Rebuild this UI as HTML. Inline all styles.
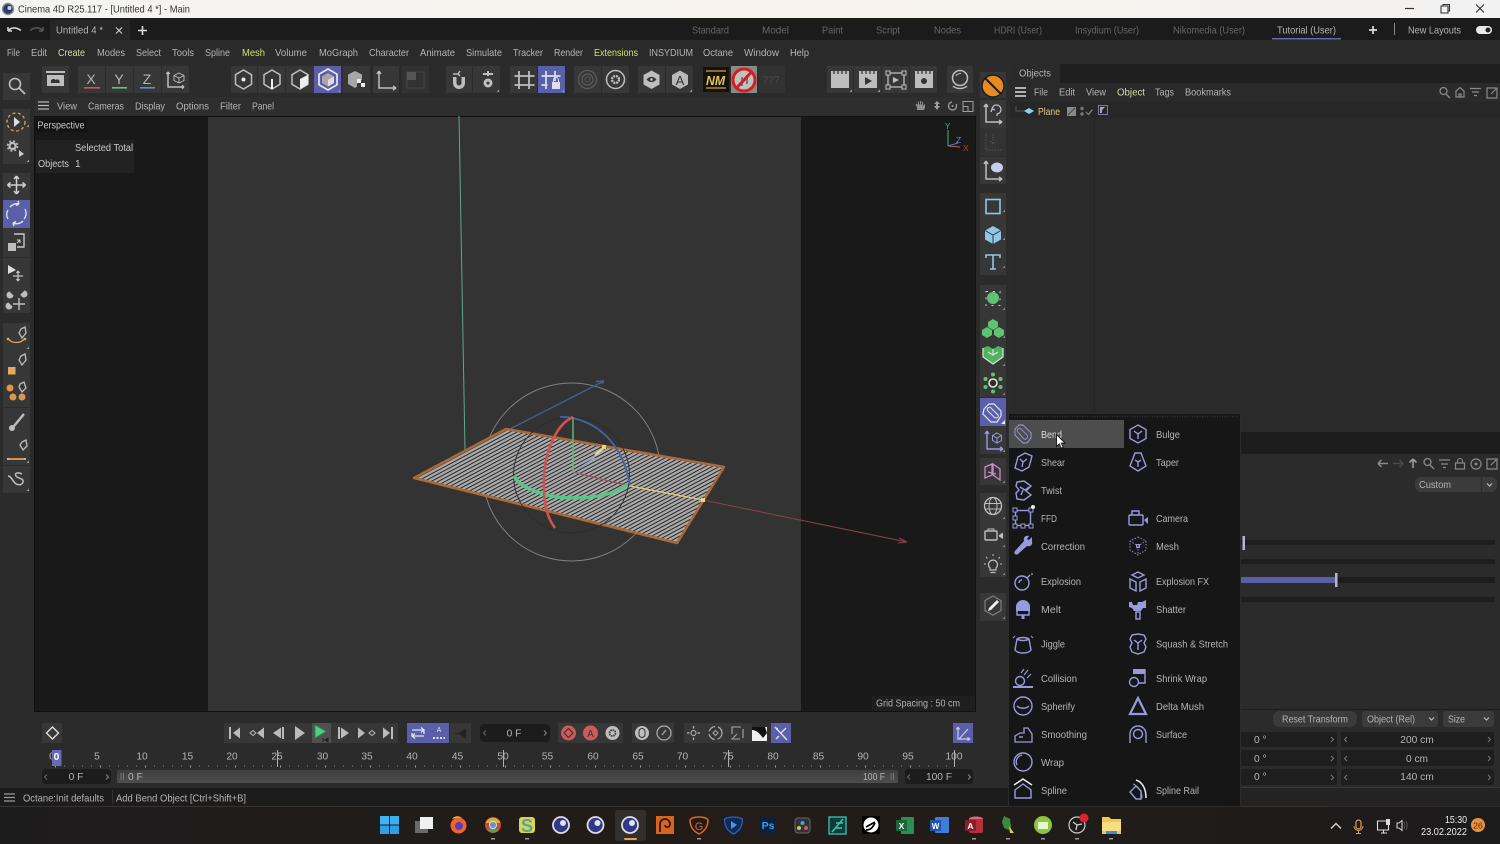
<!DOCTYPE html>
<html><head><meta charset="utf-8"><title>Cinema 4D</title>
<style>
html,body{margin:0;padding:0;background:#2b2b2b;width:1500px;height:844px;overflow:hidden}
svg{display:block;filter:blur(.35px)}
text{font-family:"Liberation Sans",sans-serif;font-size:10.2px;fill:#b4b4b4}
.d{fill:#666}.g{fill:#d6dca6}.w{fill:#dedede}
.m{text-anchor:middle}
.b{fill:#373737}.h{fill:#5a5fa8}
.i{fill:none;stroke:#bebebe;stroke-width:1.5}
.f{fill:#bebebe;stroke:none}
.p{fill:none;stroke:#9a99e0;stroke-width:1.4}
.pf{fill:#9a99e0;stroke:none}
.bl{fill:none;stroke:#8fc7e6;stroke-width:1.6}
</style></head>
<body>
<svg width="1500" height="844" viewBox="0 0 1500 844" xmlns="http://www.w3.org/2000/svg">
<defs>
<pattern id="hat" width="3.3" height="20" patternUnits="userSpaceOnUse" patternTransform="rotate(62)">
<rect width="3.3" height="20" fill="#aaaaaa"/><rect width="1" height="20" fill="#262626"/>
</pattern>
<linearGradient id="tb" x1="0" x2="1" y1="0" y2="0"><stop offset="0" stop-color="#f4f4f3"/><stop offset=".55" stop-color="#f8f3ec"/><stop offset="1" stop-color="#f2f2f2"/></linearGradient>
<linearGradient id="rng" x1="0" x2="0" y1="0" y2="1"><stop offset="0" stop-color="#3e3e3e"/><stop offset="1" stop-color="#4e4e4e"/></linearGradient>
<linearGradient id="tk" x1="0" x2="1" y1="0" y2="0"><stop offset="0" stop-color="#1d1c1d"/><stop offset=".5" stop-color="#231c18"/><stop offset="1" stop-color="#1c1b1c"/></linearGradient>
</defs>

<!-- base -->
<rect width="1500" height="844" fill="#2b2b2b"/>
<!-- title bar -->
<rect width="1500" height="18" fill="url(#tb)"/>
<circle cx="8" cy="9" r="5.5" fill="#2c3a6e"/><circle cx="8" cy="9" r="5.5" fill="none" stroke="#8d8d98" stroke-width="1.4"/><circle cx="9.5" cy="8" r="2" fill="#c9cfe4"/>
<text x="18" y="12.5" style="fill:#333;font-size:10.2px" textLength="172" lengthAdjust="spacingAndGlyphs">Cinema 4D R25.117 - [Untitled 4 *] - Main</text>
<path d="M1405 8.5h9" stroke="#333" stroke-width="1.2"/>
<path d="M1441 6h7v7h-7zM1443 6V4.500h6.500V11H1448" fill="none" stroke="#333" stroke-width="1.1"/>
<path d="M1476 4.500l8 8M1484 4.500l-8 8" stroke="#333" stroke-width="1.2"/>

<!-- tab bar -->
<rect y="18" width="1500" height="22" fill="#1b1b1b"/>
<rect x="50" y="20" width="80" height="20" fill="#262626"/>
<path d="M8 31c3-4 8-4 13-.500M8 31V27M8 31h4" fill="none" stroke="#d0d0d0" stroke-width="1.6"/>
<path d="M43 31c-3-4-8-4-13-.500M43 31V27M43 31h-4" fill="none" stroke="#555" stroke-width="1.600"/>
<text x="56" y="33.500" textLength="47" lengthAdjust="spacingAndGlyphs">Untitled 4 *</text>
<path d="M116 27.500l6 6M122 27.500l-6 6" stroke="#ccc" stroke-width="1.200"/>
<path d="M142.500 26v9M138 30.500h9" stroke="#ddd" stroke-width="1.600"/>
<text x="692" y="33.500" class="d" textLength="37" lengthAdjust="spacingAndGlyphs">Standard</text>
<text x="762" y="33.500" class="d" textLength="27" lengthAdjust="spacingAndGlyphs">Model</text>
<text x="822" y="33.500" class="d" textLength="21" lengthAdjust="spacingAndGlyphs">Paint</text>
<text x="876" y="33.500" class="d" textLength="24" lengthAdjust="spacingAndGlyphs">Script</text>
<text x="934" y="33.500" class="d" textLength="27" lengthAdjust="spacingAndGlyphs">Nodes</text>
<text x="994" y="33.500" class="d" textLength="48" lengthAdjust="spacingAndGlyphs">HDRI (User)</text>
<text x="1075" y="33.500" class="d" textLength="64" lengthAdjust="spacingAndGlyphs">Insydium (User)</text>
<text x="1173" y="33.500" class="d" textLength="72" lengthAdjust="spacingAndGlyphs">Nikomedia (User)</text>
<text x="1277" y="33.500" textLength="59" lengthAdjust="spacingAndGlyphs">Tutorial (User)</text>
<rect x="1272" y="38" width="69" height="1.500" fill="#6a6ab0"/>
<path d="M1373 26v8M1369 30h8" stroke="#ddd" stroke-width="1.700"/>
<rect x="1394" y="23" width="1" height="12" fill="#888"/>
<text x="1408" y="33.500" textLength="53" lengthAdjust="spacingAndGlyphs">New Layouts</text>
<rect x="1476" y="26" width="16" height="8" rx="4" fill="#e8e8e8"/><circle cx="1488" cy="30" r="2.500" fill="#222"/>

<!-- menu bar -->
<rect y="40" width="1500" height="24" fill="#2a2a2a"/>
<g>
<text x="7" y="56" textLength="13" lengthAdjust="spacingAndGlyphs">File</text>
<text x="31" y="56" textLength="16" lengthAdjust="spacingAndGlyphs">Edit</text>
<text x="58" y="56" class="g" textLength="27" lengthAdjust="spacingAndGlyphs">Create</text>
<text x="97" y="56" textLength="28" lengthAdjust="spacingAndGlyphs">Modes</text>
<text x="136" y="56" textLength="25" lengthAdjust="spacingAndGlyphs">Select</text>
<text x="172" y="56" textLength="22" lengthAdjust="spacingAndGlyphs">Tools</text>
<text x="205" y="56" textLength="25" lengthAdjust="spacingAndGlyphs">Spline</text>
<text x="242" y="56" style="fill:#d3e06a" textLength="23" lengthAdjust="spacingAndGlyphs">Mesh</text>
<text x="275" y="56" textLength="32" lengthAdjust="spacingAndGlyphs">Volume</text>
<text x="319" y="56" textLength="39" lengthAdjust="spacingAndGlyphs">MoGraph</text>
<text x="369" y="56" textLength="40" lengthAdjust="spacingAndGlyphs">Character</text>
<text x="420" y="56" textLength="35" lengthAdjust="spacingAndGlyphs">Animate</text>
<text x="466" y="56" textLength="36" lengthAdjust="spacingAndGlyphs">Simulate</text>
<text x="513" y="56" textLength="30" lengthAdjust="spacingAndGlyphs">Tracker</text>
<text x="554" y="56" textLength="29" lengthAdjust="spacingAndGlyphs">Render</text>
<text x="594" y="56" style="fill:#d3e06a" textLength="44" lengthAdjust="spacingAndGlyphs">Extensions</text>
<text x="649" y="56" textLength="44" lengthAdjust="spacingAndGlyphs">INSYDIUM</text>
<text x="703" y="56" textLength="30" lengthAdjust="spacingAndGlyphs">Octane</text>
<text x="744" y="56" textLength="35" lengthAdjust="spacingAndGlyphs">Window</text>
<text x="790" y="56" textLength="19" lengthAdjust="spacingAndGlyphs">Help</text>
</g>

<!-- top toolbar -->
<g>
<rect x="42" y="66" width="27" height="27" class="b"/>
<rect x="78" y="66" width="111" height="27" class="b"/>
<rect x="231" y="66" width="139" height="27" class="b"/>
<rect x="373" y="66" width="26" height="27" class="b"/>
<rect x="402" y="66" width="27" height="27" style="fill:#323232"/>
<rect x="446" y="66" width="54" height="27" class="b"/>
<rect x="510" y="66" width="27" height="27" class="b"/>
<rect x="574" y="66" width="55" height="27" class="b"/>
<rect x="638" y="66" width="55" height="27" class="b"/>
<rect x="758" y="66" width="27" height="27" fill="#323232"/>
<rect x="827" y="66" width="110" height="27" class="b"/>
<rect x="947" y="66" width="26" height="27" class="b"/>
<rect x="314" y="66" width="27" height="27" class="h"/>
<rect x="538" y="66" width="27" height="27" class="h"/>
<path d="M105.500 66v27M133.500 66v27M161.500 66v27M257.500 66v27M285.500 66v27M342 66v27M472.500 66v27M601.500 66v27M665.500 66v27M853.500 66v27M881.500 66v27M909.500 66v27" stroke="#2b2b2b"/>
</g>
<!-- archive -->
<path d="M46 71h19v2H46z" fill="#bebebe"/><path d="M47 75h17v11H47z" fill="#bebebe"/><path d="M51 83c-1-4 3-5 4.500-3 2-1.500 5 0 4 3z" fill="#333"/>
<!-- XYZ -->
<text x="91" y="84" class="m" style="font-size:14px">X</text><rect x="84" y="87" width="16" height="1.600" fill="#c25a5a"/>
<text x="119" y="84" class="m" style="font-size:14px">Y</text><rect x="112" y="87" width="15" height="1.600" fill="#63c46f"/>
<text x="147" y="84" class="m" style="font-size:14px">Z</text><rect x="140" y="87" width="15" height="1.600" fill="#5c8ed0"/>
<path d="M168 72v15h16M168 72l-1.500 2M168 72l1.500 2M184 87l-2-1.500M184 87l-2 1.500" class="i"/><path d="M179 73l5 2.500v5l-5 2.500-5-2.500v-5zM174 75.500l5 2.500 5-2.500M179 78v5" fill="none" stroke="#bebebe" stroke-width=".9"/>
<!-- hexes -->
<path d="M243.500 70l8 4.700v9.600l-8 4.700-8-4.700v-9.600z" class="i"/><circle cx="243.500" cy="79.500" r="2" fill="#eee"/>
<path d="M272 70l8 4.700v9.600l-8 4.700-8-4.700v-9.600z" class="i"/><rect x="271" y="79" width="2" height="10" fill="#eee"/>
<path d="M300 70l8 4.700v9.600l-8 4.700-8-4.700v-9.600z" class="i"/><path d="M300 79l8-4.300v9.600l-8 4.700z" fill="#eee"/>
<path d="M328 69l9 5.200v10.600l-9 5.200-9-5.200V74.200z" fill="none" stroke="#e6e6f2" stroke-width="1.700"/><path d="M328 73l6 3.500v6.500l-6 3.500-6-3.500v-6.500z" fill="#a8a8a8"/><path d="M328 80l6-3.500v6.500l-6 3.500z" fill="#dcdcdc"/>
<path d="M355 71l7 3.500v5l-5 4v3l-2 1.500-7-4V74.500z" fill="#a6a6a6"/><path d="M357 79h4v4h4v4h-4v-4h-4z" fill="#eee"/>
<path d="M379 71v17h17M379 71l-2 3M379 71l2 3M396 88l-3-2M396 88l-3 2" class="i"/>
<rect x="407" y="72" width="17" height="16" fill="none" stroke="#444" stroke-width="1.200"/><rect x="407" y="72" width="9" height="8" fill="#555"/>
<!-- magnets -->
<path d="M453 77v6a6 6 0 0 0 12 0v-6h-3.500v6a2.500 2.500 0 0 1-5 0v-6z" class="f"/><path d="M453 74h6M460 71l-2 3 2 2" class="i"/>
<circle cx="488" cy="83" r="4.500" fill="#bebebe"/><circle cx="488" cy="83" r="1.500" fill="#373737"/><path d="M483 74h10M488 71v5" class="i" style="stroke-width:2"/>
<path d="M519 71v18M529 71v18M514.500 76h20M514.500 85h20" class="i" style="stroke-width:1.800"/>
<path d="M546 71v18M555 71v10M541.500 76h19M541.500 85h6" fill="none" stroke="#dde" stroke-width="1.700"/><rect x="552" y="82" width="8" height="7" fill="#dde"/><path d="M553.500 82v-2a2.500 2.500 0 0 1 5 0v2" fill="none" stroke="#dde"/>
<circle cx="587.500" cy="79.500" r="9" fill="none" stroke="#5a5a5a" stroke-width="1.300"/><circle cx="587.500" cy="79.500" r="5.500" fill="none" stroke="#5a5a5a" stroke-width="1.300"/><circle cx="587.500" cy="79.500" r="2.500" fill="none" stroke="#5a5a5a"/>
<circle cx="615.500" cy="79.500" r="9" class="i"/><circle cx="615.500" cy="79.500" r="3.500" fill="none" stroke="#bebebe" stroke-width="2.400" stroke-dasharray="2 .8"/>
<path d="M651.500 70.500l8 4.500v9.500l-8 4.500-8-4.500V75z" fill="#bebebe"/><path d="M646.500 79.500c3-3.500 7-3.500 10 0-3 3.500-7 3.500-10 0z" fill="#373737"/><circle cx="651.500" cy="79.500" r="1.300" fill="#bebebe"/>
<path d="M680 70.500l8 4.500v9.500l-8 4.500-8-4.500V75z" fill="#b8b8b8"/><text x="680" y="85" class="m" style="font-size:13px;fill:#333">A</text>
<!-- NM -->
<rect x="703" y="67" width="26" height="25" fill="#141209"/>
<rect x="706" y="70" width="20" height="2" fill="#8a6d2a"/><rect x="706" y="87" width="20" height="2" fill="#8a6d2a"/>
<text x="715.500" y="85" class="m" style="font-size:13px;font-weight:bold;fill:#e8c25a;font-style:italic" textLength="19" lengthAdjust="spacingAndGlyphs">NM</text>
<rect x="731" y="66" width="26" height="27" fill="#8a8a8a"/><circle cx="744" cy="80" r="11" fill="#c0c0c0" stroke="#cf1f1f" stroke-width="3"/><path d="M741 77h2v9h-2zM746 75h2v9h-2z" fill="#777"/><path d="M736.500 88l15-16" stroke="#cf1f1f" stroke-width="3"/>
<text x="771" y="83" class="m" style="fill:#4c4c4c;font-size:10px">???</text>
<!-- clapper -->
<path d="M831 71h18v17h-18z" fill="#bebebe"/><path d="M834 71v3M838 71v3M842 71v3M846 71v3" stroke="#373737" stroke-width="1.300"/>
<path d="M859 71h18v17h-18z" fill="#bebebe"/><path d="M862 71v3M866 71v3M870 71v3M874 71v3" stroke="#373737" stroke-width="1.300"/><path d="M865 77l7 4-7 4z" fill="#333"/>
<rect x="888" y="73" width="16" height="14" fill="none" stroke="#bebebe" stroke-width="1.300"/><path d="M893 77l6 3-6 3z" fill="#bebebe"/><path d="M886 71h4v4h-4zM902 71h4v4h-4zM886 85h4v4h-4zM902 85h4v4h-4z" fill="#373737" stroke="#bebebe"/>
<path d="M915 71h18v17h-18z" fill="#bebebe"/><path d="M918 71v3M922 71v3M926 71v3M930 71v3" stroke="#373737" stroke-width="1.300"/><circle cx="924" cy="81" r="3" fill="#333"/>
<circle cx="960" cy="78" r="7.500" fill="none" stroke="#bebebe" stroke-width="1.500"/><path d="M953 86c2 2 4 2.500 7 2.500s5-.500 7-2.500" class="i"/><path d="M956 76c1-2 3-2.500 5-2.500" class="i" style="stroke-width:1"/>

<!-- view panel -->
<rect x="35" y="97" width="940" height="19" fill="#2e2e2e"/>
<path d="M38 102h11M38 105.500h11M38 109h11" stroke="#b9b9b9" stroke-width="1.200"/>
<text x="57" y="109.500" textLength="20" lengthAdjust="spacingAndGlyphs">View</text>
<text x="88" y="109.500" textLength="36" lengthAdjust="spacingAndGlyphs">Cameras</text>
<text x="135" y="109.500" textLength="30" lengthAdjust="spacingAndGlyphs">Display</text>
<text x="176" y="109.500" textLength="33" lengthAdjust="spacingAndGlyphs">Options</text>
<text x="220" y="109.500" textLength="21" lengthAdjust="spacingAndGlyphs">Filter</text>
<text x="252" y="109.500" textLength="22" lengthAdjust="spacingAndGlyphs">Panel</text>
<path d="M917 110v-3l-1.500-2.500 1-1 1.500 1.500v-3.500h1v3h1v-3.500h1v3.500h1v-3h1v4h1v-1l1-.500v3c0 2-1 3-2 3h-3z" fill="#8e8e8e"/>
<path d="M937 101l3 3h-2v2h2l-3 4-3-4h2v-2h-2z" fill="#9e9e9e"/>
<circle cx="952.500" cy="106" r="4" fill="none" stroke="#9e9e9e" stroke-width="1.300" stroke-dasharray="18 5"/><circle cx="952.500" cy="106" r="1" fill="#9e9e9e"/>
<rect x="963" y="101.500" width="10" height="10" fill="none" stroke="#9e9e9e"/><rect x="963" y="106.500" width="5" height="5" fill="none" stroke="#9e9e9e"/>

<!-- viewport -->
<rect x="34" y="116" width="942" height="596" fill="#111"/>
<rect x="35" y="117" width="940" height="594" fill="#191919"/>
<rect x="208" y="117" width="593" height="594" fill="#333"/>
<rect x="36" y="118" width="51" height="14" fill="#131313"/>
<text x="37.500" y="128.500" style="fill:#c9c9c9" textLength="47" lengthAdjust="spacingAndGlyphs">Perspective</text>
<rect x="36" y="140" width="98" height="33" fill="#222"/>
<text x="75" y="151" style="fill:#c9c9c9" textLength="58" lengthAdjust="spacingAndGlyphs">Selected Total</text>
<text x="38" y="167" style="fill:#c9c9c9" textLength="31" lengthAdjust="spacingAndGlyphs">Objects</text>
<text x="75" y="167" style="fill:#c9c9c9">1</text>
<!-- axis widget -->
<path d="M948 130v16" stroke="#4fb46f" stroke-width="1"/><path d="M948 146l10-3" stroke="#4a7cc4"/><path d="M948 146l12 1" stroke="#c25a5a"/>
<text x="945" y="129" style="font-size:8px;fill:#4fb46f">Y</text><text x="956" y="143" style="font-size:8.500px;fill:#5a8fd0">Z</text><text x="963" y="151" style="font-size:8.500px;fill:#c23a3a">X</text>
<!-- grid -->
<rect x="872" y="696" width="103" height="15" fill="#1f1f1f"/>
<text x="876" y="706.500" textLength="84" lengthAdjust="spacingAndGlyphs">Grid Spacing : 50 cm</text>

<!-- 3D scene -->
<path d="M459 116l6 334" stroke="#5da88a" stroke-width="1"/>
<circle cx="571.500" cy="472" r="89" fill="none" stroke="#808080" stroke-width="1"/>
<path d="M510 429L604 381M604 381l-8 0.500M604 381l-2 3" stroke="#3f5f9a" stroke-width="1.400" fill="none"/>
<path d="M703 500l204 42M907 542l-8-4M907 542l-9 1" stroke="#8a4248" stroke-width="1" fill="none"/>
<path d="M414 478L506 429L724 467L677 543Z" fill="url(#hat)" stroke="#a9693a" stroke-width="2.600" stroke-linejoin="round"/>
<circle cx="571.500" cy="475" r="58" fill="none" stroke="#2c2c2c" stroke-width=".9"/>
<path d="M560 417c20-1 60 12 70 68" fill="none" stroke="#3f64a8" stroke-width="1.800"/>
<path d="M573 417v55" stroke="#62bb72" stroke-width="1.400"/>
<path d="M573 472l52 13" stroke="#a0505a" stroke-width="1.200"/>
<path d="M573 472l22-14" stroke="#8fa0cc" stroke-width="1.400"/>
<path d="M595 455l9-7" stroke="#e4e09a" stroke-width="2"/><rect x="602" y="445" width="4" height="4" fill="#ecd86a"/>
<path d="M514 476c6 12 32 22 60 22 24 0 44-5 53-14" fill="none" stroke="#55c886" stroke-width="3.400"/>
<path d="M573 417c-18 8-30 38-29 70 0 18 4 32 11 41" fill="none" stroke="#d2504e" stroke-width="2.600"/>
<path d="M630 486l73 14" stroke="#ecd86a" stroke-width="1.100"/><rect x="701" y="498" width="4" height="4" fill="#ecd86a"/>

<!-- left toolbar -->
<g>
<rect x="3" y="73" width="27" height="27" class="b"/>
<rect x="3" y="109" width="27" height="55" class="b"/>
<rect x="3" y="173" width="27" height="84" class="b"/>
<rect x="3" y="258" width="27" height="55" class="b"/>
<rect x="3" y="323" width="27" height="84" class="b"/>
<rect x="3" y="408" width="27" height="57" class="b"/>
<rect x="3" y="466" width="27" height="27" class="b"/>
<rect x="3" y="200" width="27" height="28" class="h"/>
</g>
<circle cx="15" cy="84" r="5.500" class="i" style="stroke-width:1.600"/><path d="M19 88l6 6" class="i" style="stroke-width:1.800"/>
<circle cx="16" cy="122" r="9" fill="none" stroke="#d59a57" stroke-width="1.400" stroke-dasharray="3 2.500"/><path d="M14 117l6 5-6 5z" fill="#ddd"/>
<circle cx="12.500" cy="146" r="3" fill="none" stroke="#bebebe" stroke-width="2.200"/><circle cx="12.500" cy="146" r="5" fill="none" stroke="#bebebe" stroke-width="1.600" stroke-dasharray="2 2"/><path d="M19 150l5 4-5 3z" fill="#ccc"/>
<path d="M16.500 176v18M7.500 185h18M16.500 176l-2.500 3M16.500 176l2.500 3M16.500 194l-2.500-3M16.500 194l2.500-3M7.500 185l3-2.500M7.500 185l3 2.500M25.500 185l-3-2.500M25.500 185l-3 2.500" class="i" style="stroke:#cfcfcf"/>
<path d="M10 207a9 9 0 0 1 9-3M23 221a9 9 0 0 1-10 2M19 204l-1-3M19 204l-3 1.500M13 223l1 3M13 223l3-1.500" fill="none" stroke="#dfe0f4" stroke-width="1.500"/><path d="M25 209a9 9 0 0 1-1 10M8 219a9 9 0 0 1 0-9" fill="none" stroke="#dfe0f4" stroke-width="1.300"/>
<path d="M14 234h10v13h-7" fill="none" stroke="#c8c8c8" stroke-width="1.400"/><rect x="8" y="243" width="8" height="8" fill="#bebebe"/><path d="M17 243l3-3M20 243v-3h-3" stroke="#ccc" fill="none"/>
<path d="M8 265l8 5-8 4z" fill="#ddd"/><path d="M18 271v10M13 276h10M18 271l-1.500 2M18 271l1.500 2M18 281l-1.500-2M18 281l1.500-2" class="i" style="stroke-width:1.300"/>
<path d="M10 292a3 3 0 1 0 3 3M24 291a3 3 0 1 1-3 3M9 303a3 3 0 1 0 3 3" fill="#bebebe" stroke="#bebebe"/><path d="M19 298v12M13 304h12" class="i" style="stroke-width:1.400"/>
<path d="M21 329l4-2 1 6-4 5-3-5z" class="i" style="stroke-width:1.300"/><path d="M8 338c3 6 13 6 17 0" fill="none" stroke="#dba766" stroke-width="1.300"/><circle cx="8" cy="339" r="1.300" fill="#e6a85c"/><circle cx="25" cy="339" r="1.300" fill="#e6a85c"/>
<path d="M21 356l4-2 1 6-4 5-3-5z" class="i" style="stroke-width:1.300"/><rect x="8" y="367" width="7.500" height="7.500" fill="#e6a85c"/>
<circle cx="10" cy="388" r="3.500" fill="#e0944c"/><circle cx="13" cy="397" r="3.500" fill="#e0944c"/><circle cx="22" cy="397" r="3.500" fill="#e0944c"/><path d="M20 384l4-2 2 6-4 4-3-5z" class="i" style="stroke-width:1.300"/>
<path d="M24 414l-10 12" stroke="#bebebe" stroke-width="2.400"/><circle cx="12" cy="428" r="3" fill="#bebebe"/>
<path d="M22 442l4-2 1 6-4 4-3-5z" class="i" style="stroke-width:1.300"/><path d="M9 459h15" stroke="#e6a85c" stroke-width="1.700"/><circle cx="8" cy="459" r="1" fill="#ddd"/><circle cx="25" cy="459" r="1" fill="#ddd"/>
<path d="M22 474c-4-2-8-1-6 2s8 2 7 6-6 3-8 1c-3-3-4-7-7-7" class="i" style="stroke-width:1.500"/>

<!-- right toolbar -->
<g>
<rect x="980" y="72" width="26" height="26" class="b"/>
<rect x="980" y="100" width="26" height="28" class="b"/>
<rect x="980" y="128" width="26" height="28" fill="#323232"/>
<rect x="980" y="157" width="26" height="27" class="b"/>
<rect x="980" y="193" width="26" height="82" class="b"/>
<rect x="980" y="285" width="26" height="112" class="b"/>
<rect x="980" y="398" width="26" height="28" class="h"/>
<rect x="980" y="426" width="26" height="28" class="b"/>
<rect x="980" y="458" width="26" height="27" class="b"/>
<rect x="980" y="493" width="26" height="84" class="b"/>
<rect x="980" y="593" width="26" height="28" class="b"/>
</g>
<circle cx="993" cy="86" r="11" fill="#e88a1e" stroke="#1d1d1d" stroke-width="1.500"/><path d="M985 78l16 16" stroke="#1d1d1d" stroke-width="2"/>
<path d="M986 104v18h16M986 104l-2 3M986 104l2 3M1002 122l-3-2M1002 122l-3 2" class="i"/><path d="M992 109a4.500 4.500 0 1 1 5 5l0 2M992 109l-1 3M992 109l3 1" class="i" style="stroke-width:1.300"/>
<path d="M986 134v16h15M993 134v10M990 141l3 3 3-3" fill="none" stroke="#505050" stroke-dasharray="1.500 1.200" stroke-width="1.200"/>
<path d="M986 161v18h16M986 161l-2 3M986 161l2 3M1002 179l-3-2M1002 179l-3 2" class="i"/><ellipse cx="997" cy="167.500" rx="6" ry="5" fill="#c8cdf2"/>
<rect x="986" y="199.500" width="14" height="14" fill="none" stroke="#8fc7e6" stroke-width="1.600"/>
<path d="M993 226l8 4.500v9l-8 4.500-8-4.500v-9z" fill="#8fc7e6"/><path d="M985 230.500l8 4.500 8-4.500M993 235v9" stroke="#2e3a44" stroke-width="1" fill="none"/>
<path d="M986 258v-3h14v3M993 255v14M990 269h6" class="bl"/>
<circle cx="993" cy="298" r="6" fill="#5fc46f"/><path d="M986 291.500h14v14h-14z" fill="none" stroke="#ccc" stroke-width="1" stroke-dasharray="2 4.900"/>
<path d="M993 319l5 3v5l-5 3-5-3v-5z M987 327l5 3v5l-5 3-5-3v-5z M999 327l5 3v5l-5 3-5-3v-5z" fill="#5fc46f"/>
<path d="M983 348l5-2 5 3 5-3 5 2v9l-10 7-10-7z" fill="#4fb360"/><path d="M983 348v9l10 7 10-7v-9M988 352l5 3 5-3M993 349v6" fill="none" stroke="#e0e0e0" stroke-width="1.200"/>
<circle cx="993" cy="383" r="4" fill="#2d2d2d" stroke="#dfe7df" stroke-width="1.600"/>
<g fill="#5fc46f"><circle cx="993" cy="374.500" r="2"/><circle cx="993" cy="391.500" r="2"/><circle cx="985.500" cy="379" r="2"/><circle cx="1000.500" cy="379" r="2"/><circle cx="985.500" cy="387" r="2"/><circle cx="1000.500" cy="387" r="2"/></g>
<g transform="translate(993 412)"><path d="M-9-3l5-5h5l7 7v5l-4 6h-6l-8-8z" fill="none" stroke="#e2e3f6" stroke-width="1.200"/><path d="M-5-4c1-1 2-1 3 0l7 7c1 1 0 3-1 3s-2 0-3-1l-6-6c-1-1-1-2 0-3z" fill="none" stroke="#e2e3f6" stroke-width="1"/></g>
<path d="M987 431v18h16M987 431l-2 3M987 431l2 3M1003 449l-3-2M1003 449l-3 2" fill="none" stroke="#9a99e0" stroke-width="1.400"/><path d="M997 433l4.500 2.500v5l-4.500 2.500-4.500-2.500v-5zM992.500 435.500l4.500 2.500 4.500-2.500M997 438v5" fill="none" stroke="#9a99e0"/>
<path d="M985 467l7-3v11l-7 3zM993 464l7 5v11l-7-5zM988 472l8 2" fill="none" stroke="#c68ccc" stroke-width="1.300"/>
<circle cx="993" cy="506" r="8.500" fill="none" stroke="#bebebe" stroke-width="1.300"/><ellipse cx="993" cy="506" rx="4" ry="8.500" fill="none" stroke="#bebebe"/><path d="M984.500 503.500h17M984.500 509h17" stroke="#bebebe"/>
<rect x="985" y="531" width="12" height="9" rx="1" fill="none" stroke="#bebebe" stroke-width="1.400"/><path d="M988 531v-2h6v2" fill="none" stroke="#bebebe"/><path d="M999 535l4-2.500v6.500l-4-2.500z" fill="#bebebe"/>
<path d="M990 568a4.500 4.500 0 1 1 6 0v2h-6zM990.500 572.500h5" class="i" style="stroke-width:1.200"/><path d="M993 554v2M986 557l1.500 1.500M1000 557l-1.500 1.500M984 564h2M1002 564h-2" class="i" style="stroke-width:1"/>
<path d="M993 596l8 4.600v10l-8 4.600-8-4.600v-10z" fill="none" stroke="#7e7e7e" stroke-width="1.200"/><path d="M988 611l1-3 8-8 2 2-8 8z" fill="#eee"/>

<!-- small corner triangles -->
<path d="M29 127v-2.500l-2.500 2.500zM29 162v-2.500l-2.500 2.500zM29 349v-2.500l-2.500 2.500zM29 463v-2.500l-2.500 2.500zM29 491v-2.500l-2.500 2.500zM340 92v-2.500l-2.500 2.500zM499 92v-2.500l-2.500 2.500zM564 92v-2.500l-2.500 2.500zM692 92v-2.500l-2.500 2.500zM852 92v-2.500l-2.500 2.500zM880 92v-2.500l-2.500 2.500z" fill="#999"/>
<path d="M1005 424v-4l-4 4z" fill="#eee"/>
<path d="M1005 212v-2.500l-2.500 2.500zM1005 240v-2.500l-2.500 2.500zM1005 268v-2.500l-2.500 2.500zM1005 310v-2.500l-2.500 2.500zM1005 338v-2.500l-2.500 2.500zM1005 366v-2.500l-2.500 2.500zM1005 395v-2.500l-2.500 2.500zM1005 452v-2.500l-2.500 2.500zM1005 483v-2.500l-2.500 2.500zM1005 519v-2.500l-2.500 2.500zM1005 547v-2.500l-2.500 2.500zM1005 575v-2.500l-2.500 2.500zM1005 619v-2.500l-2.500 2.500z" fill="#888"/>

<!-- objects panel -->
<rect x="1010" y="64" width="490" height="19" fill="#1f1f1f"/>
<rect x="1010" y="64" width="50" height="19" fill="#2a2a2a"/>
<text x="1019" y="76.500" textLength="32" lengthAdjust="spacingAndGlyphs">Objects</text>
<rect x="1010" y="83" width="490" height="349" fill="#2a2a2a"/>
<rect x="1010" y="102" width="490" height="16" fill="#272727"/>
<rect x="1094" y="102" width="1" height="330" fill="#242424"/>
<path d="M1015 88h11M1015 92h11M1015 96h11" stroke="#ddd" stroke-width="1.500"/>
<text x="1034" y="95.500" textLength="14" lengthAdjust="spacingAndGlyphs">File</text>
<text x="1059" y="95.500" textLength="16" lengthAdjust="spacingAndGlyphs">Edit</text>
<text x="1086" y="95.500" textLength="20" lengthAdjust="spacingAndGlyphs">View</text>
<text x="1117" y="95.500" class="g" textLength="28" lengthAdjust="spacingAndGlyphs">Object</text>
<text x="1155" y="95.500" textLength="19" lengthAdjust="spacingAndGlyphs">Tags</text>
<text x="1185" y="95.500" textLength="46" lengthAdjust="spacingAndGlyphs">Bookmarks</text>
<path d="M1016 106v5h8" fill="none" stroke="#555"/><path d="M1029 108l5 3-5 3-5-3z" fill="#8fd0ea"/>
<text x="1038" y="115" style="fill:#e2c98a" textLength="22" lengthAdjust="spacingAndGlyphs">Plane</text>
<rect x="1067" y="107" width="9" height="9" fill="#8a8a8a"/><path d="M1068 115l7-7" stroke="#444"/>
<circle cx="1082" cy="108.500" r="1.700" fill="#777"/><circle cx="1082" cy="114" r="1.700" fill="#777"/>
<path d="M1086 112l2.500 2.500 4-5" fill="none" stroke="#888" stroke-width="1.100"/>
<rect x="1098.500" y="105.500" width="9" height="9" fill="none" stroke="#7878a8"/><path d="M1100 107h5l-3 3v3h-2z" fill="#aaa"/>
<circle cx="1443.500" cy="91" r="3.500" fill="none" stroke="#8a8a8a" stroke-width="1.300"/><path d="M1446 94l4 4" stroke="#8a8a8a" stroke-width="1.300"/>
<path d="M1456 97v-6l4-3.500 4 3.500v6zM1459 97v-3h2v3" fill="none" stroke="#8a8a8a" stroke-width="1.200"/>
<path d="M1470 88.500h11M1472 92h7M1474 95.500h3" stroke="#8a8a8a" stroke-width="1.300"/>
<path d="M1495 88h-8v10h10v-7M1491 94l6-6M1494 88h3v3" fill="none" stroke="#8a8a8a" stroke-width="1.200"/>

<!-- separator + attribute panel -->
<rect x="1010" y="432" width="490" height="22" fill="#1d1d1d"/>
<rect x="1241" y="454" width="259" height="255" fill="#2b2b2b"/>
<path d="M1378 463.500h10M1378 463.500l3.500-3.500M1378 463.500l3.500 3.500" fill="none" stroke="#8a8a8a" stroke-width="1.500"/>
<path d="M1393 463.500h10M1403 463.500l-3.500-3.500M1403 463.500l-3.500 3.500" fill="none" stroke="#4a4a4a" stroke-width="1.500"/>
<path d="M1413 468v-9M1413 459l-3.500 3.500M1413 459l3.500 3.500" fill="none" stroke="#9a9a9a" stroke-width="1.600"/>
<circle cx="1427.500" cy="462" r="3.500" fill="none" stroke="#8a8a8a" stroke-width="1.300"/><path d="M1430 465l4 4" stroke="#8a8a8a" stroke-width="1.300"/>
<path d="M1439 460h11M1441 464h7M1443 467.500h3" stroke="#8a8a8a" stroke-width="1.300"/>
<rect x="1455.500" y="463" width="9" height="6" fill="none" stroke="#8a8a8a" stroke-width="1.200"/><path d="M1457.500 463v-2a2.500 2.500 0 0 1 5 0v2" fill="none" stroke="#8a8a8a"/>
<circle cx="1476" cy="464" r="5" fill="none" stroke="#8a8a8a" stroke-width="1.200"/><circle cx="1476" cy="464" r="1.500" fill="#8a8a8a"/>
<path d="M1495 459h-8v10h10v-7M1491 465l6-6M1494 459h3v3" fill="none" stroke="#8a8a8a" stroke-width="1.200"/>
<rect x="1415" y="477" width="82" height="15" rx="6" fill="#3b3b3b"/>
<rect x="1481" y="477" width="1" height="15" fill="#2b2b2b"/>
<text x="1419" y="488" textLength="32" lengthAdjust="spacingAndGlyphs">Custom</text>
<path d="M1487 483.500l2.500 2.500 2.500-2.500" fill="none" stroke="#bbb" stroke-width="1.200"/>
<rect x="1241" y="540" width="254" height="5" fill="#1e1e1e"/>
<rect x="1241" y="559" width="254" height="5" fill="#1e1e1e"/>
<rect x="1241" y="577" width="254" height="6" fill="#1e1e1e"/>
<rect x="1241" y="577" width="95" height="6" fill="#5a5fa8"/>
<rect x="1241" y="597" width="254" height="5" fill="#1e1e1e"/>
<rect x="1242.500" y="536" width="2.500" height="14" fill="#b6b6c6"/>
<rect x="1335" y="573" width="2.500" height="14" fill="#b6b6c6"/>
<rect x="1241" y="709" width="259" height="1" fill="#1d1d1d"/>
<rect x="1273" y="711" width="84" height="16" rx="7" fill="#3b3b3b"/>
<text x="1282" y="722.500" textLength="66" lengthAdjust="spacingAndGlyphs">Reset Transform</text>
<rect x="1362" y="711" width="76" height="16" rx="3" fill="#3b3b3b"/>
<text x="1367" y="722.500" textLength="48" lengthAdjust="spacingAndGlyphs">Object (Rel)</text>
<path d="M1429 717.500l2.500 2.500 2.500-2.500" fill="none" stroke="#bbb" stroke-width="1.200"/>
<rect x="1443" y="711" width="51" height="16" rx="3" fill="#3b3b3b"/>
<text x="1448" y="722.500" textLength="17" lengthAdjust="spacingAndGlyphs">Size</text>
<path d="M1484 717.500l2.500 2.500 2.500-2.500" fill="none" stroke="#bbb" stroke-width="1.200"/>
<g fill="#1e1e1e">
<rect x="1241" y="732" width="96" height="15" rx="2"/><rect x="1241" y="750" width="96" height="16" rx="2"/><rect x="1241" y="769" width="96" height="16" rx="2"/>
<rect x="1341" y="732" width="153" height="15" rx="2"/><rect x="1341" y="750" width="153" height="16" rx="2"/><rect x="1341" y="769" width="153" height="16" rx="2"/>
</g>
<text x="1254" y="743">0 °</text><text x="1254" y="762">0 °</text><text x="1254" y="780">0 °</text>
<text x="1417" y="743" class="m">200 cm</text><text x="1417" y="762" class="m">0 cm</text><text x="1417" y="780" class="m">140 cm</text>
<path d="M1331 737l2.500 2.500-2.500 2.500M1331 756l2.500 2.500-2.500 2.500M1331 775l2.500 2.500-2.500 2.500M1488 737l2.500 2.500-2.500 2.500M1488 756l2.500 2.500-2.500 2.500M1488 775l2.500 2.500-2.500 2.500M1347 737l-2.500 2.500 2.500 2.500M1347 756l-2.500 2.500 2.500 2.500M1347 775l-2.500 2.500 2.500 2.500" fill="none" stroke="#777"/>
<rect x="1241" y="787" width="259" height="1" fill="#383838"/>

<!-- timeline -->
<rect x="35" y="713" width="940" height="74" fill="#2b2b2b"/>
<rect x="42" y="723" width="20" height="20" class="b"/>
<path d="M52.500 727l6 6-6 6-6-6z" fill="none" stroke="#ddd" stroke-width="1.400"/>
<rect x="224" y="723" width="174" height="20" class="b"/>
<rect x="312" y="723" width="19" height="20" fill="#505050"/>
<path d="M230 727v12" stroke="#bbb" stroke-width="2"/><path d="M240 727.500l-7 5.500 7 5.500z" fill="#bbb"/>
<path d="M250 733l3-2.500 3 2.500-3 2.500z" fill="none" stroke="#bbb"/><path d="M264 727.500l-7 5.500 7 5.500z" fill="#bbb"/>
<path d="M281 727.500l-8 5.500 8 5.500z" fill="#bbb"/><path d="M283 727v12" stroke="#bbb" stroke-width="2"/>
<path d="M295 726l10 7-10 7z" fill="#bbb"/>
<path d="M315 725l11 6.500-11 6.500z" fill="#4fd080" stroke="#2c8a56"/><path d="M323 738v4M328 738l-3 2 3 2z" stroke="#222" fill="#222"/>
<path d="M339 727v12" stroke="#bbb" stroke-width="2"/><path d="M341 727.500l8 5.500-8 5.500z" fill="#bbb"/>
<path d="M358 727.500l7 5.500-7 5.500z" fill="#bbb"/><path d="M369 733l3-2.500 3 2.500-3 2.500z" fill="none" stroke="#bbb"/>
<path d="M383 727.500l7 5.500-7 5.500z" fill="#bbb"/><path d="M392 727v12" stroke="#bbb" stroke-width="2"/>
<rect x="407" y="723" width="21" height="20" class="h"/><rect x="428" y="723" width="21" height="20" class="h"/>
<rect x="450" y="723" width="21" height="20" class="b"/>
<path d="M412 730h12v4M424 736h-12v-3M421 727.500l3 2.500-3 2.500M415 733.500l-3 2.500 3 2.500" fill="none" stroke="#dfe0f4" stroke-width="1.300"/>
<text x="439" y="732" class="m" style="font-size:7px;fill:#dfe0f4">A</text><path d="M433 738h12" stroke="#dfe0f4" stroke-width="2" stroke-dasharray="2 1.500"/>
<path d="M455 733l4 0 7-5v11l-7-5h-4z" fill="#222"/>
<rect x="480" y="724" width="70" height="18" rx="4" fill="#1c1c1c"/>
<text x="514" y="736.500" class="m">0 F</text>
<path d="M486 730.500l-2.500 2.500 2.500 2.500" fill="none" stroke="#666"/><path d="M544 730.500l2.500 2.500-2.500 2.500" fill="none" stroke="#888"/>
<rect x="558" y="723" width="65" height="20" class="b"/>
<circle cx="568.500" cy="733" r="7.500" fill="#d05a5a"/><path d="M568.500 728.500l4.500 4.500-4.500 4.500-4.500-4.500z" fill="none" stroke="#333" stroke-width="1.100"/>
<circle cx="590.500" cy="733" r="7.500" fill="#d05a5a"/><text x="590.500" y="737" class="m" style="font-size:10px;fill:#333">A</text>
<circle cx="612.500" cy="733" r="7" fill="#bebebe"/><circle cx="612.500" cy="733" r="3" fill="none" stroke="#333" stroke-width="1.700" stroke-dasharray="1.500 .8"/>
<rect x="632" y="723" width="42" height="20" class="b"/>
<circle cx="642" cy="733" r="7" fill="#bebebe"/><rect x="639" y="728.500" width="6" height="9" rx="3" fill="none" stroke="#333"/>
<circle cx="664" cy="733" r="7" fill="none" stroke="#aaa" stroke-width="1.300"/><path d="M662 735l4-5" stroke="#aaa" stroke-width="1.300"/>
<rect x="684" y="723" width="68" height="20" class="b"/>
<rect x="752" y="723" width="19" height="20" fill="#2f2f2f"/>
<circle cx="693.500" cy="733" r="2.500" fill="none" stroke="#bbb"/><path d="M693.500 726v2.500M693.500 737.500v2.500M687 733h2.500M697.500 733h2.500" stroke="#bbb" stroke-width="1.200"/>
<circle cx="715.500" cy="733" r="6.500" fill="none" stroke="#aaa" stroke-width="1.300" stroke-dasharray="8 3"/><path d="M715.500 730.500l2.500 2.500-2.500 2.500-2.500-2.500z" fill="none" stroke="#aaa"/>
<rect x="732" y="727" width="11" height="12" fill="none" stroke="#aaa" stroke-width="1.100" stroke-dasharray="9 4"/><path d="M733 738l4-4" stroke="#aaa"/>
<rect x="752" y="727" width="15" height="14" fill="#efefef"/><path d="M752 727h13l2 6-4 5c-3-4-6-8-11-8z" fill="#111"/>
<rect x="771" y="723" width="20" height="20" class="h"/><path d="M775 727l12 13M786 728l-5 5M776 739l3-3" stroke="#dfe0f4" stroke-width="1.400"/><circle cx="777" cy="729" r="1.200" fill="#dfe0f4"/>
<rect x="953" y="723" width="20" height="20" class="h"/><path d="M958 727v12h12M958 727l-1.500 2.500M958 727l1.500 2.500M970 739l-2.500-1.500M970 739l-2.500 1.500M959 739l9-10" fill="none" stroke="#c9cbef" stroke-width="1.200"/>

<!-- ruler -->
<path d="M55 766H955" stroke="#8a8a8a" stroke-width="1.100" stroke-dasharray="1 8"/>
<path d="M55 766.500H955" stroke="#a0a0a0" stroke-width="2" stroke-dasharray="1 44"/>
<path d="M277.500 750v17M503.500 750v17M728.500 750v17M954.500 750v17" stroke="#b0b0b0"/>
<g>
<text x="52" y="759.500" class="m">0</text>
<text x="97" y="759.500" class="m">5</text><text x="142" y="759.500" class="m">10</text><text x="187.500" y="759.500" class="m">15</text><text x="232" y="759.500" class="m">20</text><text x="277" y="759.500" class="m">25</text><text x="322.500" y="759.500" class="m">30</text><text x="367" y="759.500" class="m">35</text><text x="412" y="759.500" class="m">40</text><text x="457.500" y="759.500" class="m">45</text><text x="503" y="759.500" class="m">50</text><text x="547.500" y="759.500" class="m">55</text><text x="593" y="759.500" class="m">60</text><text x="638" y="759.500" class="m">65</text><text x="682.500" y="759.500" class="m">70</text><text x="728" y="759.500" class="m">75</text><text x="773" y="759.500" class="m">80</text><text x="818.500" y="759.500" class="m">85</text><text x="863" y="759.500" class="m">90</text><text x="908" y="759.500" class="m">95</text><text x="954" y="759.500" class="m">100</text>
</g>
<rect x="52" y="750" width="9.500" height="16" fill="#6a6ab4"/>
<text x="56.500" y="760" class="m" style="fill:#fff;font-weight:bold">0</text>
<rect x="42" y="769" width="69" height="15" rx="4" fill="#1c1c1c"/>
<text x="76" y="780" class="m">0 F</text>
<path d="M47 774.500l-2.500 2.500 2.500 2.500" fill="none" stroke="#666"/><path d="M106 774.500l2.500 2.500-2.500 2.500" fill="none" stroke="#888"/>
<rect x="117" y="770" width="781" height="13" rx="2" fill="url(#rng)"/>
<path d="M121 773v7M123.500 773v7M891 773v7M893.500 773v7" stroke="#777"/>
<text x="128" y="780">0 F</text>
<text x="863" y="780" textLength="22" lengthAdjust="spacingAndGlyphs">100 F</text>
<rect x="905" y="769" width="68" height="15" rx="3" fill="#1c1c1c"/>
<text x="939" y="780" class="m">100 F</text>
<path d="M910 774.500l-2.500 2.500 2.500 2.500" fill="none" stroke="#666"/><path d="M968 774.500l2.500 2.500-2.500 2.500" fill="none" stroke="#888"/>

<!-- status -->
<rect y="788" width="1241" height="18" fill="#1c1c1c"/>
<rect x="1241" y="788" width="259" height="18" fill="#232323"/>
<rect y="806" width="1328" height="1.500" fill="#343434"/>
<path d="M4 794h11M4 797.500h11M4 801h11" stroke="#999" stroke-width="1.200"/>
<text x="23" y="801.500" textLength="81" lengthAdjust="spacingAndGlyphs">Octane:Init defaults</text>
<rect x="112" y="790" width="1" height="14" fill="#333"/>
<text x="116" y="801.500" textLength="130" lengthAdjust="spacingAndGlyphs">Add Bend Object [Ctrl+Shift+B]</text>

<!-- popup -->
<rect x="1008" y="413" width="233" height="394" fill="#161616"/>
<rect x="1008.500" y="413.500" width="232" height="393" fill="none" stroke="#2c2c2c"/>
<path d="M1012 416.500h226" stroke="#333" stroke-dasharray="1 1.500" stroke-width="1.500"/>
<rect x="1009" y="420" width="115" height="28" fill="#4d4d4d"/>
<g>
<text x="1041" y="438" style="fill:#ddd" textLength="21" lengthAdjust="spacingAndGlyphs">Bend</text>
<text x="1156" y="438" textLength="24" lengthAdjust="spacingAndGlyphs">Bulge</text>
<text x="1041" y="466" textLength="24" lengthAdjust="spacingAndGlyphs">Shear</text>
<text x="1156" y="466" textLength="23" lengthAdjust="spacingAndGlyphs">Taper</text>
<text x="1041" y="494" textLength="21" lengthAdjust="spacingAndGlyphs">Twist</text>
<text x="1041" y="522" textLength="16" lengthAdjust="spacingAndGlyphs">FFD</text>
<text x="1156" y="522" textLength="32" lengthAdjust="spacingAndGlyphs">Camera</text>
<text x="1041" y="550" textLength="44" lengthAdjust="spacingAndGlyphs">Correction</text>
<text x="1156" y="550" textLength="23" lengthAdjust="spacingAndGlyphs">Mesh</text>
<text x="1041" y="585" textLength="40" lengthAdjust="spacingAndGlyphs">Explosion</text>
<text x="1156" y="585" textLength="53" lengthAdjust="spacingAndGlyphs">Explosion FX</text>
<text x="1041" y="613" textLength="20" lengthAdjust="spacingAndGlyphs">Melt</text>
<text x="1156" y="613" textLength="30" lengthAdjust="spacingAndGlyphs">Shatter</text>
<text x="1041" y="647.500" textLength="24" lengthAdjust="spacingAndGlyphs">Jiggle</text>
<text x="1156" y="647.500" textLength="72" lengthAdjust="spacingAndGlyphs">Squash &amp; Stretch</text>
<text x="1041" y="682" textLength="36" lengthAdjust="spacingAndGlyphs">Collision</text>
<text x="1156" y="682" textLength="51" lengthAdjust="spacingAndGlyphs">Shrink Wrap</text>
<text x="1041" y="710" textLength="34" lengthAdjust="spacingAndGlyphs">Spherify</text>
<text x="1156" y="710" textLength="48" lengthAdjust="spacingAndGlyphs">Delta Mush</text>
<text x="1041" y="738" textLength="46" lengthAdjust="spacingAndGlyphs">Smoothing</text>
<text x="1156" y="738" textLength="31" lengthAdjust="spacingAndGlyphs">Surface</text>
<text x="1041" y="766" textLength="23" lengthAdjust="spacingAndGlyphs">Wrap</text>
<text x="1041" y="794" textLength="26" lengthAdjust="spacingAndGlyphs">Spline</text>
<text x="1156" y="794" textLength="43" lengthAdjust="spacingAndGlyphs">Spline Rail</text>
</g>
<!-- popup icons -->
<g transform="translate(1023 434)"><path d="M-8-5l4-4h4l8 8v5l-4 5h-4l-8-8z" class="p" style="stroke:#8f8fc8;stroke-width:1.200"/><path d="M-5-5c1-1 2-1 3 0l6 6c1 1 1 3-1 4s-2 0-3-1l-5-6c-1-1-1-2 0-3z" class="p" style="stroke:#8f8fc8;stroke-width:1"/></g>
<g transform="translate(1138 434)"><path d="M0-9l8 4.500v9L0 9l-8-4.500v-9z" class="p"/><path d="M-4-3L0 0l4-3M0 0v5" class="p"/></g>
<g transform="translate(1023 462)"><path d="M2-9l7 3-3 11-7 4-7-3 3-11z" class="p"/><path d="M-3-3L0 0l4-3M0 0l-1 5" class="p"/></g>
<g transform="translate(1138 462)"><path d="M-3-9h6l5 13-8 5-8-5z" class="p"/><path d="M-3-2L0 0l3-2M0 0v5" class="p"/></g>
<g transform="translate(1023 490)"><path d="M-6-8l7-1 7 5-5 5 5 4-7 5-7-1-1-6 3-3-3-4z" class="p"/><path d="M-3-3L2 0 6-3M0 0l-2 5" class="p"/></g>
<g transform="translate(1023 518)"><rect x="-7.500" y="-7.500" width="15" height="15" class="p"/><path d="M-10-10h4v4h-4zM6-10h4v4h-4zM-10 6h4v4h-4zM6 6h4v4h-4zM-2 6h4v4h-4zM-10-2h4v4h-4z" fill="#161616" stroke="#9a99e0"/><circle cx="10" cy="-11" r="2" fill="#e8e8e8"/></g>
<g transform="translate(1138 518)"><rect x="-9" y="-3" width="14" height="10" rx="1" class="p"/><path d="M-6-3v-4h7v4" class="p"/><path d="M6 2l4-3v7z" class="pf"/></g>
<g transform="translate(1023 546)"><path d="M9-9l-3 3-2-1 2-3c-4-1-6 2-5 5L-8 5c-2 2 1 5 3 3l9-8c3 1 6-1 5-5z" class="pf"/></g>
<g transform="translate(1138 546)"><path d="M0-9l8 4v9l-8 5-8-5v-9zM-8-5L0 0l8-5M0 0v9" fill="none" stroke="#8f8ec8" stroke-dasharray="1.500 1.500"/><rect x="-1.500" y="-1.500" width="3" height="3" fill="none" stroke="#9a99e0"/></g>
<g transform="translate(1023 581)"><circle cx="-1" cy="2" r="7" class="p"/><path d="M-4 2a3 3 0 0 1 3-3" class="p"/><path d="M4-3l3-3" class="p"/><circle cx="9" cy="-7" r=".8" fill="#ddd"/></g>
<g transform="translate(1138 581)"><path d="M0-9l6 3-6 3-6-3z" class="p"/><path d="M-8-2l6 3v9l-6-3zM8-2L2 1v9l6-3z" class="p"/></g>
<g transform="translate(1023 609)"><path d="M-7 2v-4a7 7 0 0 1 14 0v4z" class="pf"/><path d="M-6 2v4h12V2" class="p"/><rect x="-1.500" y="6" width="3" height="4" class="pf"/></g>
<g transform="translate(1138 609)"><path d="M-9-7h3l1 3h4l1-3h4l4-2v8h-3l-2 3h-7l-2-3-3-1z" class="pf"/><rect x="-2" y="3" width="4" height="7" class="p"/></g>
<g transform="translate(1023 644)"><path d="M-6-5c3-2 9-2 12 0l2 11c-3 4-13 4-16 0z" class="p"/><path d="M-6-5c3 2 9 2 12 0" class="p"/><path d="M-8-8l-2 2M8-8l2 2" class="p" style="stroke-width:1"/></g>
<g transform="translate(1138 644)"><path d="M-6-9l6-1 6 1 2 4-2 4 2 4-2 5-6 2-6-2-2-5 2-4-2-4z" class="p"/><path d="M-4-4L0-1l4-3M0-1v7" class="p"/></g>
<g transform="translate(1023 678)"><path d="M-10 9h20" class="p" style="stroke-width:2"/><circle cx="-3" cy="3" r="4.500" class="p"/><path d="M1-3l4-5M4 0l4-4M-2-5l3-4" class="p" style="stroke-width:1.100"/></g>
<g transform="translate(1138 678)"><circle cx="-4" cy="4" r="4.500" class="p"/><path d="M-4-8h11v13H1" class="p"/><rect x="-5" y="-9" width="12" height="5" class="pf"/></g>
<g transform="translate(1023 706)"><circle r="9" class="p"/><path d="M-6 0c3 3 9 3 12 0" class="p"/></g>
<g transform="translate(1138 706)"><path d="M0-8L8 8H-8z" class="p" style="stroke-width:2.200"/></g>
<g transform="translate(1023 734)"><path d="M-8 8V2l5-3h4V-6h4l4 6v8z" class="p" style="stroke-width:1.300"/><path d="M-4 3h4" class="p"/></g>
<g transform="translate(1138 734)"><path d="M-8 9V0a8 8 0 0 1 16 0v9" class="p"/><circle cy="0" r="4.500" class="p"/></g>
<g transform="translate(1023 762)"><circle r="9" class="p"/><path d="M-6 3c-2-4 0-9 5-10" class="p"/></g>
<g transform="translate(1023 790)"><path d="M-8 0L0-6 8 0v8H-8z" class="p"/><path d="M-9-5L0-11 9-5" fill="none" stroke="#eee" stroke-width="1.500"/></g>
<g transform="translate(1138 790)"><path d="M-8 2l6-6 5 5v8H-2z" class="p"/><path d="M-2-10c6 2 10 8 10 18" fill="none" stroke="#eee" stroke-width="1.500"/><path d="M-5-6c5 2 9 7 9 14" class="p" style="stroke-width:1"/></g>
<!-- cursor -->
<path d="M1056.500 434.500v12l2.800-2.600 2 4.300 2-.900-2-4.200h3.800z" fill="#fff" stroke="#111" stroke-width=".9"/>

<!-- taskbar -->
<rect y="807" width="1500" height="37" fill="url(#tk)"/>
<rect x="615" y="810" width="31" height="31" rx="3" fill="#32302f"/>
<rect x="624" y="838" width="13" height="2" rx="1" fill="#e8a04a"/>
<g fill="#9a9a9a">
<rect x="491" y="838" width="4" height="1.500"/><rect x="525" y="838" width="4" height="1.500"/><rect x="697" y="838" width="4" height="1.500"/><rect x="972" y="838" width="4" height="1.500"/><rect x="1006" y="838" width="4" height="1.500"/><rect x="1041" y="838" width="4" height="1.500"/><rect x="1075" y="838" width="4" height="1.500"/><rect x="1109" y="838" width="4" height="1.500"/>
</g>
<g><rect x="380" y="816" width="9" height="8.500" fill="#3fb4ee"/><rect x="390" y="816" width="9" height="8.500" fill="#39b1ee"/><rect x="380" y="825.500" width="9" height="8.500" fill="#2c9fe6"/><rect x="390" y="825.500" width="9" height="8.500" fill="#2c9fe6"/></g>
<rect x="415" y="821" width="13" height="12" fill="#6a6a6a"/><rect x="420" y="817" width="13" height="12" fill="#f0f0f0"/>
<circle cx="458.500" cy="825.500" r="8" fill="#f2632c"/><circle cx="459" cy="826" r="4" fill="#5a3fb0"/><path d="M452 819c3-4 8-3 10-1-3-1-7 0-10 1z" fill="#fbb83a"/>
<circle cx="493" cy="825" r="8" fill="#c9483c"/><path d="M485.500 823a8 8 0 0 1 15 0z" fill="#d9b03a"/><path d="M487 830a8 8 0 0 0 12 0l-6-3z" fill="#5b9a5a"/><circle cx="493" cy="825" r="3.500" fill="#6a8ec8" stroke="#ddd"/>
<rect x="519" y="817" width="16" height="16" rx="3" fill="#d6d84a"/><text x="527" y="832" class="m" style="font-size:18px;font-weight:bold;fill:#5aa0a8">S</text>
<circle cx="561" cy="825" r="8" fill="#2e3a86" stroke="#dcdce6" stroke-width="1.800"/><circle cx="563" cy="823" r="3" fill="#dfe3f4"/>
<circle cx="595.500" cy="825" r="8" fill="#2e3a86" stroke="#dcdce6" stroke-width="1.800"/><circle cx="597.500" cy="823" r="3" fill="#dfe3f4"/>
<circle cx="630" cy="825" r="8" fill="#2e3a86" stroke="#dcdce6" stroke-width="1.800"/><circle cx="632" cy="823" r="3" fill="#dfe3f4"/>
<rect x="656" y="816" width="18" height="18" fill="#d8641e"/><path d="M660 832v-8a5 5 0 0 1 10 0c0 4-5 4-5 1" fill="none" stroke="#2c1a10" stroke-width="1.800"/>
<path d="M699 817c4 0 8 1 9 3 0 6-3 11-9 14-6-3-9-8-9-14 1-2 5-3 9-3z" fill="none" stroke="#d6662a" stroke-width="1.500"/><text x="699" y="830" class="m" style="font-size:11px;fill:#d6662a">G</text>
<path d="M733.500 817c4 0 7 1 9 2 0 7-3 12-9 15-6-3-9-8-9-15 2-1 5-2 9-2z" fill="#0f2b5c" stroke="#2a62b8" stroke-width="1.300"/><path d="M731 821l6 4-6 4z" fill="#4f93e8"/>
<rect x="760" y="817" width="16" height="16" rx="1" fill="#06223f"/><text x="768" y="829" class="m" style="font-size:10.500px;font-weight:bold;fill:#3da0e8">Ps</text>
<rect x="795" y="818" width="15" height="15" rx="3" fill="#2f3338" stroke="#666"/><circle cx="802.500" cy="823" r="2" fill="#4aa0d8"/><circle cx="799" cy="828" r="2" fill="#d8c24a"/><circle cx="806" cy="828" r="2" fill="#d05a5a"/>
<rect x="829" y="817" width="17" height="17" fill="#123a3a" stroke="#34c8b8" stroke-width="1.300"/><path d="M832 832l11-13M836 823h7M836 828h6" stroke="#34c8b8" stroke-width="1.500"/>
<rect x="862" y="816" width="18" height="18" fill="#000"/><circle cx="871" cy="825" r="7.500" fill="#fff"/><path d="M866 827l9-5M866 830c6 0 7-4 9-7" stroke="#000" stroke-width="1.700" fill="none"/>
<rect x="901" y="817" width="13" height="17" rx="1" fill="#2b8e55"/><rect x="896" y="820" width="11" height="11" fill="#18683a"/><text x="901.500" y="829" class="m" style="font-size:8.500px;font-weight:bold;fill:#fff">X</text>
<rect x="935" y="817" width="14" height="16" rx="1" fill="#3d7fd6"/><rect x="930" y="820" width="11" height="11" fill="#1d55a8"/><text x="935.500" y="829" class="m" style="font-size:8px;font-weight:bold;fill:#fff">W</text>
<ellipse cx="976" cy="819" rx="7" ry="2.500" fill="#e06a70"/><rect x="969" y="819" width="14" height="14" rx="2" fill="#b82f3c"/><rect x="965" y="820" width="11" height="11" fill="#8c1d28"/><text x="970.500" y="829" class="m" style="font-size:8.500px;font-weight:bold;fill:#fff">A</text>
<path d="M1004 816l6 3 1 8-2 3-5-2-2-6z" fill="#3c8a3c"/><path d="M1009 826l5 7h-4z" fill="#d8d04a"/>
<circle cx="1043" cy="825" r="9" fill="#8cc63f"/><path d="M1038 822h10v7h-10z" fill="#eaf5d6"/>
<circle cx="1077" cy="825" r="8" fill="#1c1c1c" stroke="#cfcfcf" stroke-width="1.200"/><path d="M1077 825l-4-3M1077 825l5-1M1077 825l-1 5" stroke="#cfcfcf" stroke-width="1.300"/><circle cx="1084" cy="818" r="4.500" fill="#e0202c"/>
<path d="M1102 817h7l2 2h10v15h-19z" fill="#f2c94e"/><rect x="1102" y="822" width="19" height="9" fill="#f7dd86"/><rect x="1106" y="831" width="11" height="3" fill="#3a8fcf"/>
<!-- tray -->
<path d="M1331 828.500l5-5 5 5" fill="none" stroke="#ddd" stroke-width="1.300"/>
<rect x="1356" y="820" width="5" height="9" rx="2.500" fill="none" stroke="#d6a05c" stroke-width="1.200"/><path d="M1354 826a4.500 4.500 0 0 0 9 0M1358.500 830.500v3M1356 833.500h5" fill="none" stroke="#d6a05c"/>
<path d="M1377.500 821h11v9h-11zM1381 833h6M1383.500 830v3" fill="none" stroke="#ddd" stroke-width="1.100"/><rect x="1386" y="819" width="4" height="6" fill="#ddd"/>
<path d="M1397 823h2l3-2.500v10l-3-2.500h-2z" fill="none" stroke="#ccc" stroke-width="1.100"/><path d="M1404 822c1 2 1 5 0 7M1406 821c1.500 2.500 1.500 6 0 9" fill="none" stroke="#555"/>
<text x="1445" y="823" style="fill:#eee" textLength="22" lengthAdjust="spacingAndGlyphs">15:30</text>
<text x="1421" y="835" style="fill:#eee" textLength="46" lengthAdjust="spacingAndGlyphs">23.02.2022</text>
<circle cx="1478" cy="825" r="7" fill="#e8913c"/><text x="1478" y="828.500" class="m" style="font-size:8.500px;fill:#5a2a08">26</text>
</svg>
</body></html>
